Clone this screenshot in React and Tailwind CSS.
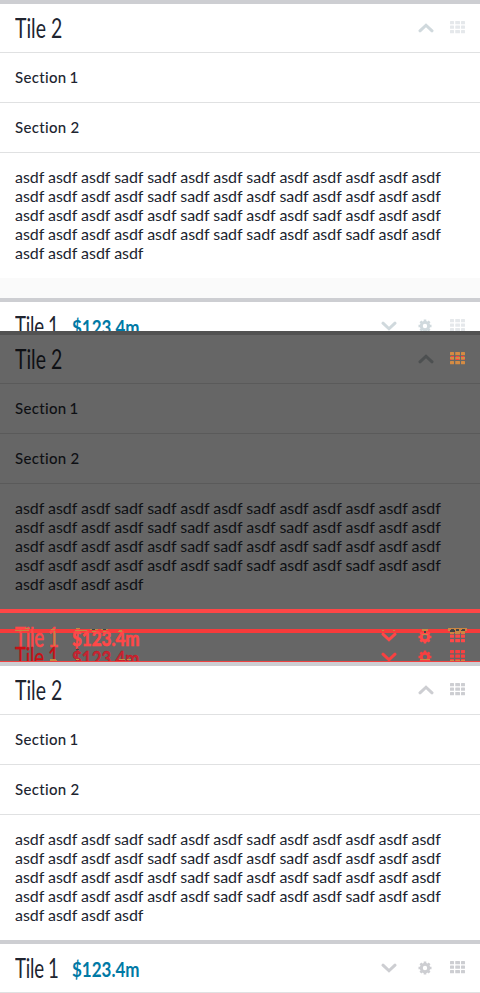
const BODY_LINES = [
  'asdf asdf asdf sadf sadf asdf asdf sadf asdf asdf asdf asdf asdf',
  'asdf asdf asdf asdf sadf sadf asdf asdf sadf asdf asdf asdf asdf',
  'asdf asdf asdf asdf asdf sadf sadf asdf asdf sadf asdf asdf asdf',
  'asdf asdf asdf asdf asdf asdf sadf sadf asdf asdf sadf asdf asdf',
  'asdf asdf asdf asdf',
];

function Chevron({ down }) {
  return (
    <svg width="16" height="10" viewBox="0 0 16 10" className={down ? 'rotate-180' : ''}>
      <path d="M2 7.8 8 2.2l6 5.6" fill="none" stroke="currentColor" strokeWidth="3" strokeLinecap="round" />
    </svg>
  );
}

function Gear({ accent }) {
  return (
    <svg width="14" height="14" viewBox="0 0 14 14" className="overflow-visible">
      <g fill="none" stroke="currentColor">
        <circle cx="7" cy="7" r="3.7" strokeWidth="3" />
        <path d="M7 .5v2M7 11.5v2M.5 7h2M11.5 7h2M2.4 2.4l1.4 1.4M10.2 10.2l1.4 1.4M2.4 11.6l1.4-1.4M10.2 3.8l1.4-1.4" strokeWidth="2.6" />
      </g>
      {accent === 'top' && (
        <g>
          <path d="M4 -1h6v2H4zM4 4h6v1H4z" fill="#cb8642" />
          <path d="M6 1h2v2H6z" fill="#444" />
        </g>
      )}
      {accent === 'bottom' && <path d="M2 9h10v1h-10z" fill="#cb8642" />}
    </svg>
  );
}

function Grid({ mark }) {
  return (
    <svg width="15" height="12" viewBox="0 0 15 12" className="overflow-visible">
      {[0, 4.5, 9].map((y) =>
        [0, 5.25, 11].map((x) => (
          <rect key={`${x}-${y}`} x={x} y={y} width={x === 5.25 ? 4.75 : 4} height="3.2" rx="0.5" fill="currentColor" />
        ))
      )}
      {mark === 'red' && <path d="M1 4.5h3M6 4.5h3M11 4.5h3M0 7.5h1M6 7.5h3M14 7.5h1" stroke="#ff4040" />}
      {mark === 'orange' && (
        <g>
          <path d="M-2 -2h19v3h-2v3h-4v-2h-1v2h-5v-2h-1v2h-4v-3h-2z" fill="#cb8642" />
          <path d="M1 -1h3v1h1v2H0v-2h1zM6 -1h3v2H6zM12 -1h3v2h-4v-1h1z" fill="#444" />
        </g>
      )}
      {mark === 'bottom' && <path d="M0 10.5h4M5.5 10.5h4.5M11 10.5h4" stroke="#cb8642" />}
    </svg>
  );
}

function Header({ title, amount, icons, amountColor = 'text-[#0079a5]', gridColor = '', mark, gear }) {
  return (
    <div className="flex h-12 items-center pr-[15px] pl-[15px]">
      <div className="w-[57px] shrink-0">
        <span className={`inline-block origin-left text-[27px] leading-[46px] whitespace-nowrap ${amount ? 'scale-x-[0.69] tracking-[-0.3px] [word-spacing:-0.5px]' : 'scale-x-[0.72]'}`}>{title}</span>
      </div>
      {amount && (
        <div className={`pt-px ${amountColor}`}>
          <span className="inline-block origin-left scale-x-[0.81] text-[21px] leading-[45px] font-bold">$123.4m</span>
        </div>
      )}
      <div className={`ml-auto flex items-center pb-px ${icons}`}>
        <Chevron down={amount} />
        {amount && <div className="ml-[21px] pt-px"><Gear accent={gear} /></div>}
        <div className={`pb-px ${amount ? 'ml-[18px]' : 'ml-4'} ${gridColor}`}><Grid mark={mark} /></div>
      </div>
    </div>
  );
}

function TileTwo({ rule, bar, icons, gridColor, mark, bodyHeight }) {
  return (
    <section>
      <div className={`h-1 ${bar}`} />
      <Header title="Tile 2" icons={icons} gridColor={gridColor} mark={mark} />
      <div className={`flex h-[50px] items-center border-t pl-[15px] ${rule}`}>
        <span className="text-[15px] font-medium tracking-[0.32px] [font-variant-ligatures:none] [word-spacing:-1px]">Section 1</span>
      </div>
      <div className={`flex h-[50px] items-center border-t pl-[15px] ${rule}`}>
        <span className="text-[15px] font-medium tracking-[0.32px] [font-variant-ligatures:none]">Section 2</span>
      </div>
      <div className={`border-t pt-[14px] pl-[15px] ${rule} ${bodyHeight}`}>
        {BODY_LINES.map((line) => (
          <p key={line} className="text-[16px] leading-[19px] tracking-[-0.04px] whitespace-nowrap">{line}</p>
        ))}
      </div>
    </section>
  );
}

export default function App() {
  return (
    <main className="h-[993px] w-[480px] overflow-hidden bg-white font-['Lato','Noto_Sans',sans-serif] text-[#20242f]">
      <div className="h-[331px] overflow-hidden">
        <TileTwo rule="border-[#e0e1e2]" bar="bg-[#cdced2]" icons="text-[#d0d9dd]" gridColor="text-[#e5e8eb]" bodyHeight="h-[126px]" />
        <div className="h-5 bg-[#fafafa]" />
        <div className="h-1 bg-[#cdced2]" />
        <Header title="Tile 1" amount icons="text-[#d0d9dd]" gridColor="text-[#e5e8eb]" />
      </div>
      <div className="relative h-[331px] overflow-hidden bg-[#666] text-[#0e1014]">
        <TileTwo rule="border-[#5a5a5a]" bar="bg-[#525252]" icons="text-[#4d5051]" gridColor="text-[#d48b43]" mark="red" bodyHeight="h-[126px]" />
        <div className="h-1 bg-[#ff4646]" />
        <div className="absolute top-[298px] left-0 h-1 w-full bg-[#f73b3b]" />
        <div className="absolute top-[282px] left-0 w-full text-[#ff4848] [-webkit-text-stroke:0.7px_#ff4848]">
          <Header title="Tile 1" amount amountColor="text-[#ff4848]" icons="text-[#ff4848]" gear="top" mark="orange" />
        </div>
        <div className="absolute top-[302px] left-0 w-full text-[#c90f14] [-webkit-text-stroke:0.3px_#c90f14]">
          <Header title="Tile 1" amount amountColor="text-[#c82433]" icons="text-[#f74040]" gear="bottom" mark="bottom" />
        </div>
        {/* Fragments where the two compared rows overlap */}
        <svg className="absolute top-[296px] left-0" width="480" height="35" viewBox="0 0 480 35">
          <path
            d="M15 3.500h14M25 1.500h4M51 2.500h4M76 1.500h4M75 3.500h12M90 2.500h8M101 2.500h7M92 4.500h4M103 4.500h3M119 3.500h3M118 4.500h4M382 3.500h2M393 3.500h2M50 32.500h6M50 33.500h7M76 32.500h3M119 32.500h6M127 32.500h4"
            stroke="#c08a42"
            fill="none"
          />
          <path d="M54.500 4v15" stroke="#c08a42" strokeWidth="1.500" />
          <path d="M92 2.500h3M103 2.500h3M76 22.500h3" stroke="#444" />
        </svg>
        <div className="absolute bottom-0 left-0 h-px w-full bg-[#ef4141]" />
      </div>
      <div className="h-[331px] overflow-hidden">
        <TileTwo rule="border-[#e0e1e2]" bar="bg-[#cdced2]" icons="text-[#cdced2]" bodyHeight="h-[126px]" />
        <div className="h-1 bg-[#cdced2]" />
        <Header title="Tile 1" amount icons="text-[#cdced2]" />
        <div className="h-px bg-[#e0e1e2]" />
      </div>
    </main>
  );
}
